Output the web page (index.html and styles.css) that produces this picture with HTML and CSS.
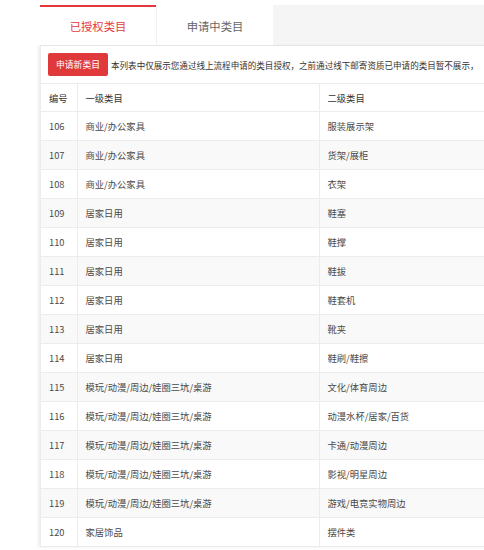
FILE: index.html
```html
<!DOCTYPE html>
<html lang="zh-CN">
<head>
<meta charset="utf-8">
<title>类目管理</title>
<link rel="stylesheet" href="styles.css">
</head>
<body>
<div class="page">
  <div class="tabs">
    <div class="tab tab-active">已授权类目</div>
    <div class="tab">申请中类目</div>
  </div>
  <div class="panel">
    <div class="toolbar">
      <button class="btn-apply">申请新类目</button>
      <span class="notice">本列表中仅展示您通过线上流程申请的类目授权，之前通过线下邮寄资质已申请的类目暂不展示，</span>
    </div>
    <table class="cat-table">
      <colgroup>
        <col class="c-no">
        <col class="c-l1">
        <col class="c-l2">
      </colgroup>
      <thead>
        <tr><th>编号</th><th>一级类目</th><th>二级类目</th></tr>
      </thead>
      <tbody>
        <tr><td>106</td><td>商业/办公家具</td><td>服装展示架</td></tr>
        <tr><td>107</td><td>商业/办公家具</td><td>货架/展柜</td></tr>
        <tr><td>108</td><td>商业/办公家具</td><td>衣架</td></tr>
        <tr><td>109</td><td>居家日用</td><td>鞋塞</td></tr>
        <tr><td>110</td><td>居家日用</td><td>鞋撑</td></tr>
        <tr><td>111</td><td>居家日用</td><td>鞋拔</td></tr>
        <tr><td>112</td><td>居家日用</td><td>鞋套机</td></tr>
        <tr><td>113</td><td>居家日用</td><td>靴夹</td></tr>
        <tr><td>114</td><td>居家日用</td><td>鞋刷/鞋擦</td></tr>
        <tr><td>115</td><td>模玩/动漫/周边/娃圈三坑/桌游</td><td>文化/体育周边</td></tr>
        <tr><td>116</td><td>模玩/动漫/周边/娃圈三坑/桌游</td><td>动漫水杯/居家/百货</td></tr>
        <tr><td>117</td><td>模玩/动漫/周边/娃圈三坑/桌游</td><td>卡通/动漫周边</td></tr>
        <tr><td>118</td><td>模玩/动漫/周边/娃圈三坑/桌游</td><td>影视/明星周边</td></tr>
        <tr><td>119</td><td>模玩/动漫/周边/娃圈三坑/桌游</td><td>游戏/电竞实物周边</td></tr>
        <tr><td>120</td><td>家居饰品</td><td>摆件类</td></tr>
      </tbody>
    </table>
  </div>
</div>
</body>
</html>
```

FILE: styles.css
```css
html, body {
  margin: 0;
  padding: 0;
  background: #ffffff;
  overflow: hidden;
  height: 550px;
}

body {
  font-family: "Noto Sans CJK SC", "Noto Sans", sans-serif;
  color: #444;
}

.page {
  margin-left: 40px;
  padding-top: 5px;
  width: 560px;
}

.tabs {
  display: flex;
  height: 40px;
  background: #f5f5f5;
  border-bottom: 1px solid #ececec;
}

.tab {
  width: 116px;
  height: 40px;
  box-sizing: border-box;
  display: flex;
  align-items: center;
  justify-content: center;
  background: #ffffff;
  font-size: 11.3px;
  color: #666;
  border-top: 2px solid transparent;
}

.tab + .tab {
  width: 117px;
  border-left: 1px solid #f0f0f0;
}

.tab-active {
  border-top-color: #e4393c;
  color: #e4393c;
}

.panel {
  background: #ffffff;
  box-shadow: -2px 0 3px rgba(0, 0, 0, 0.07);
  border-left: 1px solid #ececec;
}

.toolbar {
  display: flex;
  align-items: center;
  gap: 3px;
  padding: 7px 0 7px 7px;
  height: 23px;
}

.btn-apply {
  height: 23px;
  width: 60px;
  padding: 0;
  border: none;
  border-radius: 2px;
  background: #e0393c;
  color: #ffffff;
  font-family: inherit;
  font-size: 8.8px;
  flex: none;
}

.notice {
  font-size: 8.55px;
  color: #333;
  white-space: nowrap;
}

.cat-table {
  border-collapse: collapse;
  width: 520px;
  table-layout: fixed;
  font-size: 9.3px;
}

.c-no { width: 36px; }
.c-l1 { width: 242px; }
.c-l2 { width: 242px; }

.cat-table th,
.cat-table td {
  text-align: left;
  font-weight: normal;
  padding: 0 0 0 8px;
  border-top: 1px solid #ececec;
  border-bottom: 1px solid #ececec;
  white-space: nowrap;
}

.cat-table th + th,
.cat-table td + td {
  border-left: 1px solid #ececec;
}

.cat-table th {
  height: 27px;
  color: #333;
}

.cat-table td {
  height: 28px;
  color: #4a4a4a;
}

.cat-table tbody tr:nth-child(even) td {
  background: #f9f9f9;
}
```
